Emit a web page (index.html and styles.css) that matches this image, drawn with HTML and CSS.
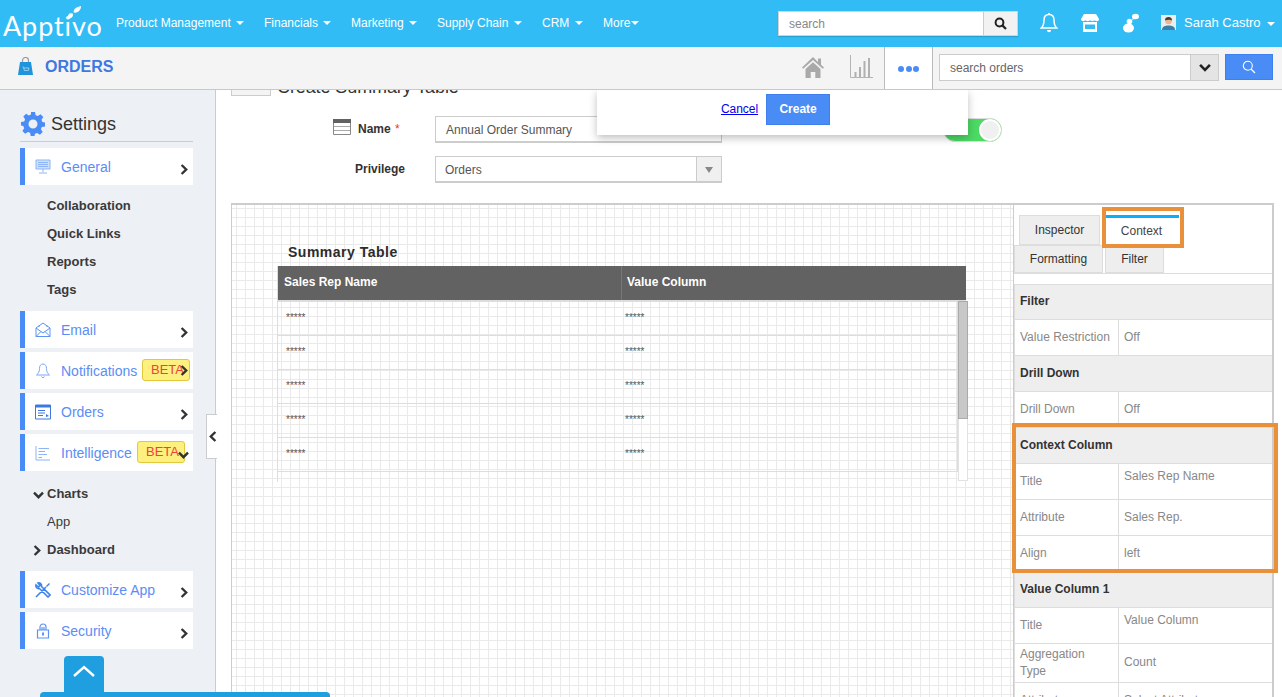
FILE: index.html
```html
<!DOCTYPE html>
<html lang="en">
<head>
<meta charset="utf-8">
<title>Apptivo Orders</title>
<link rel="stylesheet" href="styles.css">
</head>
<body>
<svg class="defs" width="0" height="0">
  <symbol id="chev-r" viewBox="0 0 8 11"><path d="M1.600 1 6.200 5.500 1.600 10" fill="none" stroke="currentColor" stroke-width="2.400"/></symbol>
  <symbol id="chev-d" viewBox="0 0 11 8"><path d="M1 1.600 5.500 6.200 10 1.600" fill="none" stroke="currentColor" stroke-width="2.400"/></symbol>
</svg>
<header class="topbar">
  <div class="logo">Apptivo<svg class="leaf" viewBox="0 0 16 15"><path d="M1 14C0 9 3 7 6 8c1 2 0 5-5 6z" fill="#fff"/><path d="M7 7c0-4 3-6 8-7 0 4-3 8-8 7z" fill="#fff"/></svg></div>
  <nav class="mainnav">
    <a class="nav-a">Product Management <i class="caret"></i></a>
    <a class="nav-b">Financials <i class="caret"></i></a>
    <a class="nav-c">Marketing <i class="caret"></i></a>
    <a class="nav-d">Supply Chain <i class="caret"></i></a>
    <a class="nav-e">CRM <i class="caret"></i></a>
    <a class="nav-f">More<i class="caret tight"></i></a>
  </nav>
  <div class="topsearch">
    <span class="topsearch-text">search</span>
    <span class="topsearch-btn"><svg width="13" height="13" viewBox="0 0 13 13"><circle cx="5.500" cy="5.500" r="3.900" fill="none" stroke="#222" stroke-width="2"/><path d="M8.400 8.400 12 12" stroke="#222" stroke-width="2.200"/></svg></span>
  </div>
  <svg class="ti ti-bell" viewBox="0 0 18 20"><path d="M9 1.500c-3.400 0-5 2.500-5 5.500 0 4-1 6.500-2.800 8h15.600C15 13.500 14 11 14 7c0-3-1.600-5.500-5-5.500z" fill="none" stroke="#fff" stroke-width="1.500"/><path d="M7 17h4c0 1.500-.9 2.200-2 2.200S7 18.500 7 17zM8 0h2v2H8z" fill="#fff"/></svg>
  <svg class="ti ti-store" viewBox="0 0 18 18"><path d="M3 0h12l3 5c0 1.500-1 2.200-2.200 2.200S13.600 6.500 13.500 6c0 .5-1 1.200-2.200 1.200S9.200 6.500 9 6c-.2.500-1 1.200-2.300 1.200S4.600 6.500 4.500 6c-.1.500-1 1.200-2.300 1.200S0 6.500 0 5z" fill="#fff"/><path d="M2 8h14v10H2zM4 10.500V15h10v-4.500z" fill="#fff" fill-rule="evenodd"/></svg>
  <svg class="ti ti-chat" viewBox="0 0 16 20"><circle cx="6.500" cy="8.500" r="2.800" fill="#fff"/><ellipse cx="5.500" cy="15" rx="5.500" ry="4.500" fill="#fff"/><ellipse cx="12.500" cy="3.500" rx="3.500" ry="2.800" fill="#fff"/><path d="m10 5-1.500 2 3-1z" fill="#fff"/></svg>
  <svg class="avatar" viewBox="0 0 15 15"><rect width="15" height="15" fill="#e9eef0"/><path d="M1 15c0-3.500 3-4.500 6.500-4.500S14 11.500 14 15z" fill="#3c7fa6"/><circle cx="7.500" cy="6" r="3.300" fill="#e6b898"/><path d="M4 5.500C4 2.800 5.500 2 7.500 2S11 2.800 11 5.500C9.500 4.500 6 4.500 4 5.500z" fill="#4a3a30"/></svg>
  <span class="username">Sarah Castro</span><i class="caret user-caret"></i>
</header>

<div class="subbar">
  <svg class="bag" viewBox="0 0 15 18"><path d="M4.500 6V3.500a3 3 0 0 1 6 0V6" fill="none" stroke="#9a9a9a" stroke-width="1.200"/><path d="M2 5h11l2 13H0z" fill="#1f94dc"/><path d="M4.500 10h1l.8 3.500h4l.7-2.500H6" fill="none" stroke="#bfe3f7" stroke-width=".7"/></svg>
  <span class="app-title">ORDERS</span>
  <svg class="sub-home" viewBox="0 0 22 21"><path d="M11 0 0 10.500l1.200 1.300L11 3l9.800 8.800L22 10.500l-3-2.800V1.500h-3v3.400zM3.500 12 11 5.200l7.500 6.800v9h-5.200v-6H8.700v6H3.500z" fill="#a9a9a9"/></svg>
  <svg class="sub-chart" viewBox="0 0 23 23"><path d="M.5 0v22.500H23" fill="none" stroke="#b4b4b4"/><path d="M4.500 17h2v5h-2zM9 12h2v10H9zM13.500 6h2v16h-2zM18 3h2v19h-2z" fill="#b0b0b0"/></svg>
  <div class="sub-more"><i></i><i></i><i></i></div>
  <div class="sub-search">
    <span class="sub-search-text">search orders</span>
    <span class="sub-search-drop"><svg width="12" height="9"><use href="#chev-d"/></svg></span>
  </div>
  <button class="sub-search-btn"><svg width="14" height="14" viewBox="0 0 14 14"><circle cx="5.800" cy="5.800" r="4.500" fill="none" stroke="#fff" stroke-width="1.100"/><path d="m9 9 4 4" stroke="#fff" stroke-width="1.300"/></svg></button>
</div>

<div class="content">
  <aside class="sidebar">
    <div class="settings-head">
      <svg class="gear" viewBox="0 0 24 24"><path fill-rule="evenodd" fill="#4a8cf5" d="M10 0h4l.6 3.200 2.200.9L19.500 2.300l2.800 2.800-1.800 2.700.9 2.200L24 10.600v3.800l-3.200.6-.9 2.200 1.800 2.700-2.800 2.800-2.700-1.800-2.200.9L13.500 24h-3.800l-.6-3.200-2.200-.9-2.700 1.800-2.800-2.800 1.800-2.700-.9-2.200L0 13.400V10l3.200-.6.9-2.200-1.800-2.700 2.800-2.800 2.700 1.800 2.200-.9zM12 7.500a4.500 4.500 0 1 0 0 9 4.500 4.500 0 0 0 0-9z"/></svg>
      <span>Settings</span>
    </div>
    <a class="side-item">
      <svg class="side-ic" viewBox="0 0 16 16"><path d="M1 1h14v9H1z" fill="#cfe0fb" stroke="#8db4f7"/><path d="M3 3.500h10M3 5.500h10M3 7.500h10M8 10v3M4 14h8" stroke="#8db4f7"/></svg>
      General<svg class="chev low" width="8" height="11"><use href="#chev-r"/></svg>
    </a>
    <ul class="side-sub first">
      <li>Collaboration</li><li>Quick Links</li><li>Reports</li><li>Tags</li>
    </ul>
    <a class="side-item">
      <svg class="side-ic" viewBox="0 0 16 16"><path d="M1 6 8 1l7 5v8.500H1zM1 6l7 5 7-5M1 14.500l5-5M15 14.500l-5-5M4 3.500 4 5M12 3.500V5" fill="none" stroke="#5b93f5"/></svg>
      Email<svg class="chev low" width="8" height="11"><use href="#chev-r"/></svg>
    </a>
    <a class="side-item gap">
      <svg class="side-ic" viewBox="0 0 16 16"><path d="M8 1C5.500 1 4.500 3 4.500 5.500c0 3-1 5-3 6.500h13c-2-1.500-3-3.500-3-6.500C11.500 3 10.500 1 8 1zM6.500 13.500c.3 1.500 2.700 1.500 3 0" fill="none" stroke="#7ba6f7"/></svg>
      Notifications<span class="beta beta-n">BETA</span><svg class="chev" width="8" height="11"><use href="#chev-r"/></svg>
    </a>
    <a class="side-item gap">
      <svg class="side-ic" viewBox="0 0 16 16"><path d="M.5 1h15v14H.5z" fill="none" stroke="#3f78e0"/><path d="M1 1h14v2.500H1zM3 6h7v1H3zM3 8.500h7v1H3zM3 11h5v1H3zM11 10l3 2-3 1z" fill="#3f78e0"/></svg>
      Orders<svg class="chev low" width="8" height="11"><use href="#chev-r"/></svg>
    </a>
    <a class="side-item gap">
      <svg class="side-ic" viewBox="0 0 16 16"><path d="M1 1v14h14M3.500 3.500H14M3.500 6.500H10M3.500 9.500H12M3.500 12.500H7" fill="none" stroke="#8db4f7"/></svg>
      Intelligence<span class="beta beta-i">BETA</span><svg class="chev-down" width="11" height="8"><use href="#chev-d"/></svg>
    </a>
    <ul class="side-sub">
      <li class="has-mark"><svg class="mark-d" width="11" height="8"><use href="#chev-d"/></svg>Charts</li>
      <li class="plain">App</li>
      <li class="has-mark"><svg class="mark-r" width="8" height="11"><use href="#chev-r"/></svg>Dashboard</li>
    </ul>
    <a class="side-item">
      <svg class="side-ic" viewBox="0 0 16 16"><path d="M1 15 11 5M3 1c2-.5 4 1 3.500 3.500L15 13l-2 2-8.500-8.500C2 7 .5 5 1 3l2.500 2L5 3.500z" fill="none" stroke="#3f84e8" stroke-width="1.600"/><path d="m11 4 3-3 1 1-3 3z" fill="#3f84e8"/></svg>
      Customize App<svg class="chev low" width="8" height="11"><use href="#chev-r"/></svg>
    </a>
    <a class="side-item gap">
      <svg class="side-ic" viewBox="0 0 16 16"><path d="M2.500 7h11v8h-11zM5 7V4a3 3 0 0 1 6 0v3M7 4v3M9 4v3" fill="none" stroke="#5b93f5" stroke-width="1.200"/><path d="M7 9.500h2v3H7z" fill="#5b93f5"/></svg>
      Security<svg class="chev low" width="8" height="11"><use href="#chev-r"/></svg>
    </a>
    <button class="collapse"><svg width="8" height="11" viewBox="0 0 8 11"><path d="M6.400 1 1.800 5.500 6.400 10" fill="none" stroke="#333" stroke-width="2.400"/></svg></button>
  </aside>

  <main class="main">
    <div class="title-row">
      <span class="title-ic"></span>
      <h1>Create Summary Table</h1>
    </div>
    <div class="form-row">
      <svg class="name-ic" viewBox="0 0 18 16"><path d="M.5.500h17v15H.5z" fill="#fff" stroke="#888"/><path d="M0 0h18v4H0z" fill="#626262"/><path d="M1 7.500h16M1 11.500h16" stroke="#aaa"/></svg>
      <label class="lbl-name">Name <em>*</em></label>
      <span class="field">Annual Order Summary</span>
    </div>
    <div class="form-row second">
      <label class="lbl-priv">Privilege</label>
      <span class="field select">Orders<i class="select-arrow"></i></span>
    </div>

    <section class="canvas">
      <div class="grid">
        <div class="summary-title">Summary Table</div>
        <div class="summary">
          <div class="summary-head"><span class="col-a">Sales Rep Name</span><span class="col-b">Value Column</span></div>
          <div class="summary-row"><span class="col-c">*****</span><span>*****</span></div>
          <div class="summary-row"><span class="col-c">*****</span><span>*****</span></div>
          <div class="summary-row"><span class="col-c">*****</span><span>*****</span></div>
          <div class="summary-row"><span class="col-c">*****</span><span>*****</span></div>
          <div class="summary-row"><span class="col-c">*****</span><span>*****</span></div>
          <div class="scrollbar"><i></i></div>
        </div>
      </div>
      <div class="panel">
        <div class="tabs one"><span class="tab t-ins">Inspector</span><span class="tab t-ctx">Context</span></div>
        <div class="tabs two"><span class="tab t-fmt">Formatting</span><span class="tab t-fil">Filter</span></div>
        <div class="sec">Filter</div>
        <div class="prop"><span>Value Restriction</span><span>Off</span></div>
        <div class="sec">Drill Down</div>
        <div class="prop"><span>Drill Down</span><span>Off</span></div>
        <div class="sec">Context Column</div>
        <div class="prop"><span>Title</span><span class="up">Sales Rep Name</span></div>
        <div class="prop"><span>Attribute</span><span>Sales Rep.</span></div>
        <div class="prop"><span>Align</span><span>left</span></div>
        <div class="sec">Value Column 1</div>
        <div class="prop"><span>Title</span><span class="up">Value Column</span></div>
        <div class="prop tall"><span>Aggregation Type</span><span>Count</span></div>
        <div class="prop"><span>Attribute</span><span>Select Attribute</span></div>
        <div class="hl hl-tab"></div>
        <div class="hl hl-col"></div>
      </div>
    </section>

    <div class="popup">
      <a class="cancel">Cancel</a>
      <button class="create">Create</button>
    </div>
    <div class="toggle"><i></i></div>
  </main>
</div>
<button class="to-top"><svg width="24" height="14" viewBox="0 0 24 14"><path d="M2 12 12 3l10 9" fill="none" stroke="#fff" stroke-width="2.400"/></svg></button>
<div class="bottom-bar"></div>
</body>
</html>
```
FILE: styles.css
```css
* { box-sizing: border-box; }
html, body { margin: 0; height: 697px; overflow: hidden; }
body { font-family: "Liberation Sans", Arial, sans-serif; font-size: 12px; color: #333; background: #fff; display: flex; flex-direction: column; position: relative; }
.defs { position: absolute; }
i { display: block; }

/* top bar */
.topbar { height: 47px; flex: none; background: #31bcf6; display: flex; align-items: center; color: #fff; }
.logo { font-family: Lato, sans-serif; font-weight: 400; font-size: 27px; letter-spacing: .9px; line-height: 47px; width: 116px; padding-left: 3px; padding-top: 4px; position: relative; flex: none; }
.leaf { position: absolute; left: 67px; top: 8px; width: 15px; height: 14px; }
.mainnav { display: flex; width: 662px; flex: none; margin-top: -2px; }
.mainnav a { white-space: nowrap; font-size: 12px; }
.nav-a { width: 148px; }
.nav-b { width: 87px; }
.nav-c { width: 86px; }
.nav-d { width: 105px; }
.nav-e { width: 61px; }
.caret { display: inline-block; width: 0; height: 0; border: 4px solid transparent; border-top-color: #fff; border-bottom: 0; margin-left: 2px; vertical-align: 2px; }
.caret.tight { margin-left: 1px; }
.topsearch { width: 240px; height: 25px; flex: none; background: #fff; border: 1px solid #d4d4d4; display: flex; align-items: center; justify-content: space-between; box-shadow: 0 1px 1px rgba(0,0,0,.15); }
.topsearch-text { padding-left: 10px; padding-top: 1px; color: #888; font-size: 12px; }
.topsearch-btn { width: 34px; height: 23px; background: #f2f2f2; border-left: 1px solid #ccc; display: flex; align-items: center; justify-content: center; }
.ti { flex: none; }
.ti-bell { width: 18px; height: 20px; margin-left: 22px; margin-top: -2px; }
.ti-store { width: 18px; height: 18px; margin-left: 23px; margin-top: -2px; }
.ti-chat { width: 16px; height: 20px; margin-left: 24px; margin-top: -2px; }
.avatar { width: 15px; height: 15px; margin-left: 22px; margin-top: -2px; flex: none; }
.username { margin-left: 8px; font-size: 13px; margin-top: -2px; white-space: nowrap; }
.user-caret { margin-left: 6px; margin-top: 0; }

/* sub bar */
.subbar { height: 43px; flex: none; background: #f4f4f4; border-bottom: 1px solid #c8c8c8; display: flex; align-items: center; position: relative; z-index: 3; }
.bag { width: 15px; height: 18px; margin-left: 18px; margin-top: -5px; flex: none; }
.app-title { margin-left: 12px; font-size: 16px; font-weight: bold; color: #3f78e0; width: 757px; flex: none; margin-top: -3px; }
.sub-home { width: 22px; height: 21px; flex: none; margin-top: -1px; }
.sub-chart { width: 23px; height: 23px; margin-left: 26px; flex: none; margin-top: -3px; }
.sub-more { width: 49px; height: 42px; margin-left: 11px; background: #fff; border-left: 1px solid #bbb; border-right: 1px solid #bbb; display: flex; align-items: center; justify-content: center; gap: 1.500px; flex: none; padding-top: 2px; }
.sub-more i { width: 6px; height: 6px; border-radius: 50%; background: #4a8cf5; }
.sub-search { width: 280px; height: 27px; margin-left: 6px; background: #fff; border: 1px solid #ccc; display: flex; align-items: center; justify-content: space-between; flex: none; margin-top: -1px; }
.sub-search-text { padding-left: 10px; color: #666; font-size: 12px; }
.sub-search-drop { width: 28px; height: 25px; background: #e4e4e4; border-left: 1px solid #ccc; display: flex; align-items: center; justify-content: center; color: #222; }
.sub-search-btn { width: 48px; height: 26px; margin-left: 6px; background: #4a8cf5; border: 1px solid #3f80ee; padding: 0; flex: none; margin-top: -2px; display: flex; align-items: center; justify-content: center; }

/* layout */
.content { flex: 1; display: flex; min-height: 0; }
.sidebar { width: 216px; flex: none; background: #edf0f5; border-right: 1px solid #ccc; padding-left: 20px; padding-right: 22px; position: relative; }
.settings-head { height: 52px; border-bottom: 1px solid #ccc; display: flex; align-items: center; gap: 6px; font-size: 18px; color: #333; padding-left: 1px; padding-top: 17px; }
.gear { width: 24px; height: 24px; }
.side-item { height: 37px; background: #fff; border-left: 5px solid #4a8cf5; display: flex; align-items: center; position: relative; color: #5b8df5; font-size: 14px; }
.settings-head + .side-item { margin-top: 6px; }
.side-item.gap { margin-top: 4px; }
.side-ic { width: 16px; height: 16px; margin-left: 10px; margin-right: 10px; flex: none; }
.chev { position: absolute; left: 155px; top: 13px; color: #333; }
.chev.low { top: 16px; }
.chev-down { position: absolute; left: 153px; top: 17px; color: #333; }
.beta { position: absolute; background: #fdf07e; border: 1px solid #e0c93a; border-radius: 3px; color: #f04040; font-size: 13px; height: 22px; line-height: 19px; padding-left: 8px; }
.beta-n { left: 117px; top: 7px; width: 48px; }
.beta-i { left: 112px; top: 7px; width: 48px; }
.side-sub { list-style: none; margin: 0; padding: 9px 0 7px 27px; }
.side-sub.first { padding-top: 7px; }
.side-sub li { height: 28px; line-height: 28px; font-size: 13px; font-weight: bold; color: #3a3a3a; position: relative; }
.side-sub li.plain { font-weight: normal; }
.mark-d { position: absolute; left: -14px; top: 11px; color: #333; }
.mark-r { position: absolute; left: -14px; top: 9px; color: #333; }
.collapse { position: absolute; left: 206px; top: 324px; width: 11px; height: 45px; padding: 0 0 0 2px; background: #fff; border: 1px solid #ccc; border-right: 0; display: flex; align-items: center; justify-content: center; z-index: 2; }
.to-top { position: absolute; left: 64px; top: 656px; width: 40px; height: 36px; border: 0; padding: 0 0 4px; background: #1f9fdf; border-radius: 4px 4px 0 0; }
.bottom-bar { position: absolute; left: 40px; top: 692px; width: 290px; height: 8px; background: #1f9fdf; border-radius: 4px 4px 0 0; }

/* main */
.main { flex: 1; min-width: 0; position: relative; overflow: hidden; padding-left: 15px; }
.title-row { display: flex; gap: 6px; margin-top: -20px; height: 46px; align-items: flex-start; padding-top: 3px; }
.title-ic { width: 40px; height: 23px; background: #f4f4f4; border: 1px solid #ccc; display: block; flex: none; }
.title-row h1 { margin: 0; font-size: 18px; font-weight: normal; line-height: 20px; color: #333; padding-top: 4px; letter-spacing: -.1px; }
.form-row { display: flex; align-items: center; height: 27px; position: relative; padding-left: 204px; }
.form-row.second { margin-top: 13px; }
.name-ic { position: absolute; left: 102px; top: 3px; width: 18px; height: 16px; }
.form-row label { position: absolute; font-weight: bold; color: #333; font-size: 12px; top: 6px; }
.lbl-name { left: 127px; }
.lbl-name em { color: #e33; font-weight: normal; font-style: normal; margin-left: 1px; }
.lbl-priv { left: 124px; }
.field { width: 287px; height: 27px; border: 1px solid #ccc; border-bottom-width: 2px; background: #fff; padding-left: 10px; line-height: 27px; color: #555; position: relative; }
.field.select { padding-left: 9px; }
.select-arrow { position: absolute; right: 0; top: 0; width: 25px; height: 24px; background: #f0f0f0; border-left: 1px solid #ccc; }
.select-arrow::after { content: ""; position: absolute; left: 8px; top: 10px; border: 4px solid transparent; border-top: 6px solid #888; border-bottom: 0; }

/* canvas */
.canvas { margin-top: 20px; height: 520px; width: 1043px; border: 1px solid #ccc; border-top-width: 2px; border-right-width: 2px; display: flex; }
.grid { width: 781px; flex: none; padding: 38px 0 0 45px; background-color: #fff; background-image: linear-gradient(#eaeaea 1px, transparent 1px), linear-gradient(90deg, #eaeaea 1px, transparent 1px); background-size: 9px 9px; background-position: 4px 3px; }
.summary-title { font-size: 14px; font-weight: bold; letter-spacing: .5px; padding-left: 11px; height: 23px; line-height: 16px; color: #2c2c2c; padding-top: 1px; }
.summary { width: 690px; height: 216px; position: relative; border-left: 1px solid #ddd; }
.summary-head { height: 36px; width: 688px; background: #626262; border-bottom: 2px solid #ddd; color: #fff; font-weight: bold; display: flex; align-items: center; position: relative; }
.col-a { width: 344px; padding-left: 6px; height: 34px; line-height: 32px; border-right: 1px solid #777; flex: none; }
.col-b { padding-left: 5px; margin-top: -2px; }
.summary-row { height: 34px; width: 680px; border-bottom: 1px solid #ddd; border-right: 1px solid #ddd; display: flex; font-size: 10px; line-height: 32px; color: #555; padding-left: 8px; }
.col-c { width: 339px; flex: none; }
.scrollbar { position: absolute; left: 680px; top: 35px; width: 10px; height: 180px; background: #fff; border: 1px solid #e2e2e2; }
.scrollbar i { height: 118px; background: #c8c8c8; border: 1px solid #aaa; margin: -1px; }
.panel { flex: 1; min-width: 0; background: #fff; border-left: 1px solid #ccc; position: relative; padding-top: 10px; }
.tabs { display: flex; }
.tab { display: block; background: #eee; border: 1px solid #ddd; text-align: center; color: #333; font-size: 12px; }
.tabs.one { height: 30px; padding-left: 5px; gap: 6px; }
.t-ins { width: 81px; height: 30px; line-height: 29px; }
.t-ctx { width: 73px; height: 31px; background: #fff; border: 0; border-top: 3px solid #0ab0f5; line-height: 26px; color: #444; padding-right: 2px; }
.tabs.two { height: 29px; gap: 2px; border-bottom: 1px solid #ddd; margin-bottom: 10px; }
.t-fmt { width: 89px; line-height: 27px; }
.t-fil { width: 59px; line-height: 27px; }
.sec { height: 36px; background: #eee; border-bottom: 1px solid #ddd; border-left: 1px solid #ddd; font-weight: bold; line-height: 35px; padding-left: 5px; color: #333; }
.tabs.two + .sec { border-top: 1px solid #ddd; line-height: 33px; }
.prop { height: 36px; display: grid; grid-template-columns: 104px 1fr; color: #888; border-left: 1px solid #ddd; border-bottom: 1px solid #ddd; }
.prop span { padding-left: 5px; padding-bottom: 1px; line-height: 17px; align-self: center; }
.prop span:first-child { height: 100%; display: flex; align-items: center; border-right: 1px solid #ddd; padding-right: 6px; }
.prop span.up { align-self: start; padding-top: 4px; }
.prop.tall { height: 39px; }
.hl { position: absolute; border: 4px solid #e8913a; pointer-events: none; }
.hl-tab { left: 88px; top: 2px; width: 82px; height: 41px; }
.hl-col { left: -2px; top: 218px; width: 266px; height: 150px; }

/* popup */
.popup { position: absolute; left: 381px; top: 0; width: 371px; height: 45px; background: #fff; box-shadow: 0 3px 8px rgba(0,0,0,.25); display: flex; align-items: flex-start; padding-left: 124px; gap: 8px; z-index: 2; padding-top: 4px; }
.cancel { color: #00e; text-decoration: underline; font-size: 12px; margin-top: 8px; letter-spacing: -.05px; }
.create { width: 64px; height: 31px; background: #4a8cf5; border: 1px solid #3f80ee; color: #fff; font-weight: bold; font-size: 12px; font-family: inherit; padding: 0 0 2px; }
.toggle { position: absolute; left: 727px; top: 28px; width: 59px; height: 24px; background: #4cd964; border-radius: 12px; border: 1px solid #ddd; }
.toggle i { position: absolute; right: 0; top: 0; width: 22px; height: 22px; background: #f0f0f0; border: 2px solid #fff; border-radius: 50%; box-shadow: 0 0 1px #6c6; }
```
